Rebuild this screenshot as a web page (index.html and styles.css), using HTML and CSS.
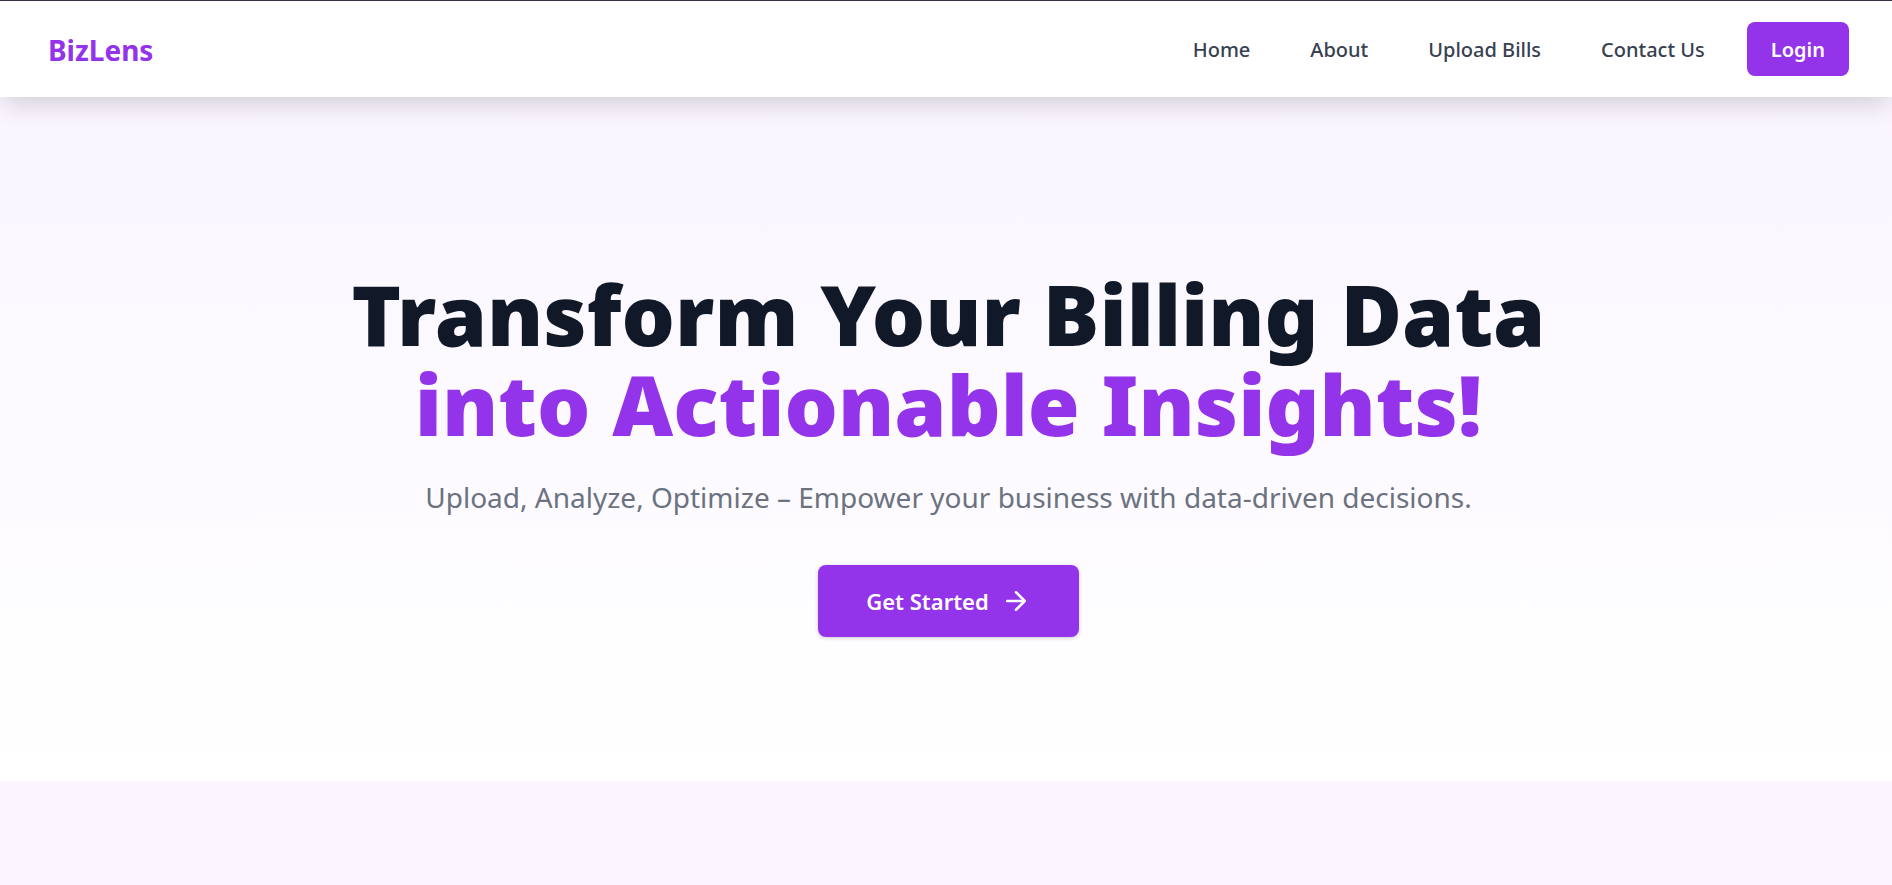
FILE: index.html
```html
<!DOCTYPE html>
<html lang="en">
<head>
<meta charset="utf-8">
<meta name="viewport" content="width=device-width, initial-scale=1">
<title>BizLens</title>
<link rel="stylesheet" href="styles.css">
</head>
<body>
<header class="navbar">
  <a class="brand" href="#">BizLens</a>
  <nav class="nav-links">
    <a class="nav-link" href="#">Home</a>
    <a class="nav-link" href="#">About</a>
    <a class="nav-link" href="#">Upload Bills</a>
    <a class="nav-link" href="#">Contact Us</a>
    <button class="login" type="button">Login</button>
  </nav>
</header>
<main>
  <section class="hero">
    <h1 class="hero-title">Transform Your Billing Data <span class="accent">into Actionable Insights!</span></h1>
    <p class="hero-text">Upload, Analyze, Optimize – Empower your business with data-driven decisions.</p>
    <button class="cta" type="button">Get Started
      <svg class="cta-icon" viewBox="0 0 24 24" aria-hidden="true"><path d="M5 12h14M12 5l7 7-7 7"/></svg>
    </button>
  </section>
  <section class="features"></section>
</main>
</body>
</html>
```
FILE: styles.css
```css
* {
  box-sizing: border-box;
}

body {
  margin: 0;
  min-height: 100vh;
  display: flex;
  flex-direction: column;
  font-family: "Noto Sans", "Open Sans", sans-serif;
  color: #111827;
  background: #ffffff;
}

.navbar {
  position: relative;
  display: flex;
  align-items: center;
  justify-content: space-between;
  padding: 21px 43px 21px 48px;
  border-top: 1px solid #3b2f4a;
  background: #ffffff;
  box-shadow: 0 10px 25px -3px rgba(0, 0, 0, 0.16);
}

.brand {
  padding-top: 2px;
  font-size: 28px;
  line-height: 40px;
  font-weight: 700;
  color: #9333ea;
  text-decoration: none;
}

.nav-links {
  display: flex;
  align-items: center;
  gap: 60px;
}

.nav-link {
  padding-top: 2px;
  font-size: 20px;
  line-height: 30px;
  font-weight: 500;
  color: #374151;
  text-decoration: none;
}

.login {
  margin-left: -18px;
  padding: 13px 24px 11px;
  border: 0;
  border-radius: 8px;
  font: 600 20px/30px "Noto Sans", "Open Sans", sans-serif;
  color: #ffffff;
  background: #9333ea;
}

main {
  flex: 1;
  display: flex;
  flex-direction: column;
}

.hero {
  display: flex;
  flex-direction: column;
  align-items: center;
  padding: 172px 40px 144px 45px;
  text-align: center;
  background: linear-gradient(#faf5ff, #ffffff);
}

.hero-title {
  margin: 0;
  font-size: 84px;
  line-height: 90px;
  font-weight: 900;
}

.accent {
  display: block;
  color: #9333ea;
}

.hero-text {
  margin: 26px 0 45px;
  font-size: 28px;
  line-height: 45px;
  color: #6b7280;
}

.cta {
  display: flex;
  align-items: center;
  gap: 12px;
  padding: 20px 48px;
  border: 0;
  border-radius: 8px;
  font: 600 22px/32px "Noto Sans", "Open Sans", sans-serif;
  color: #ffffff;
  background: #9333ea;
  box-shadow: 0 1px 4px rgba(0, 0, 0, 0.2);
}

.cta-icon {
  width: 30px;
  height: 30px;
  fill: none;
  stroke: currentColor;
  stroke-width: 2;
  stroke-linecap: round;
  stroke-linejoin: round;
}

.features {
  flex: 1;
  min-height: 104px;
  background: #faf5ff;
}
```
